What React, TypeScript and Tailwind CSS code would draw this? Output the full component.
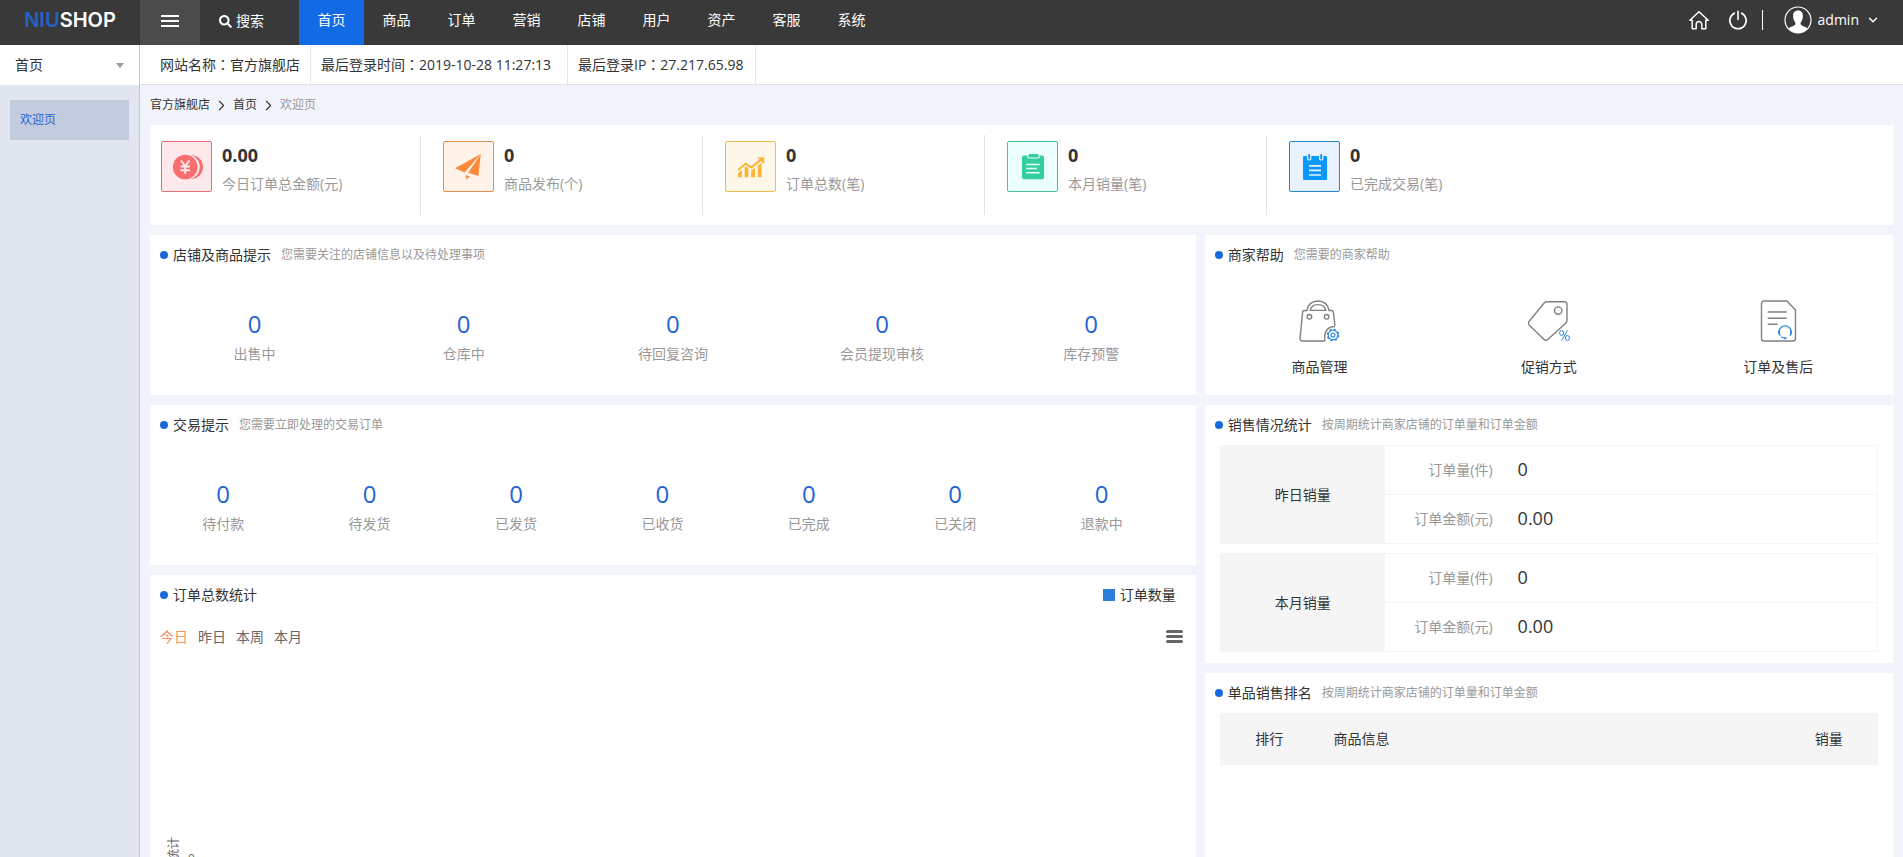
import type { ReactNode } from "react"
import { ChevronDown, ChevronRight } from "lucide-react"
import { FaSearch } from "react-icons/fa"

const menus = ["首页", "商品", "订单", "营销", "店铺", "用户", "资产", "客服", "系统"]

const overview = [
  { value: "0.00", label: "今日订单总金额(元)", box: "border-[#e57079] bg-[#fee9ea]", icon: <YenIcon /> },
  { value: "0", label: "商品发布(个)", box: "border-[#e3914b] bg-[#fff2e8]", icon: <PlaneIcon /> },
  { value: "0", label: "订单总数(笔)", box: "border-[#ecbd4b] bg-[#fdf7ea]", icon: <TrendIcon /> },
  { value: "0", label: "本月销量(笔)", box: "border-[#4abf9f] bg-[#ebfffc]", icon: <ClipboardIcon /> },
  { value: "0", label: "已完成交易(笔)", box: "border-[#2489cc] bg-[#e9f2fc]", icon: <NotepadIcon /> },
]

const shopTips = ["出售中", "仓库中", "待回复咨询", "会员提现审核", "库存预警"]
const tradeTips = ["待付款", "待发货", "已发货", "已收货", "已完成", "已关闭", "退款中"]

const helps = [
  { label: "商品管理", icon: <BagIcon /> },
  { label: "促销方式", icon: <TagIcon /> },
  { label: "订单及售后", icon: <OrderIcon /> },
]

const sales = ["昨日销量", "本月销量"]
const ranges = ["今日", "昨日", "本周", "本月"]

function YenIcon() {
  return (
    <svg viewBox="0 0 49 49" className="size-full">
      <circle cx="29" cy="25" r="12" fill="#f76d70" />
      <circle cx="25.4" cy="25" r="12.4" fill="#fee9ea" />
      <circle cx="23.2" cy="25" r="12.3" fill="#f76d70" />
      <path
        d="M19 18.5l4.2 5.5 4.2-5.5M23.2 24v8M18.4 24.6h9.6M18.4 28.2h9.6"
        fill="none"
        stroke="#fee9ea"
        strokeWidth="2"
      />
    </svg>
  )
}

function PlaneIcon() {
  return (
    <svg viewBox="0 0 49 49" className="size-full" fill="#fb8a3c">
      <path d="M36.8 12L11 26.3l9.6 4.2zM36.8 12l-2.4 22-10.2-3.2zM21.6 33l4.4 1.5-3.6 3z" />
    </svg>
  )
}

function TrendIcon() {
  return (
    <svg viewBox="0 0 49 49" className="size-full" fill="#fbb636">
      <path d="M12 31l3.8-3v7.3H12zM18.6 25.5l1.2-.9 2.6 1.9v8.8h-3.8zM25.2 28.4l3.8-2.6v9.5h-3.8zM31.8 23.8l3.8-3.2v14.7h-3.8z" />
      <path d="M12 28l7.7-6.2 5.7 3.6 10-8" fill="none" stroke="#fbb636" strokeWidth="2" />
      <path d="M31 15.2h7.2v7z" />
    </svg>
  )
}

function ClipboardIcon() {
  return (
    <svg viewBox="0 0 49 49" className="size-full">
      <rect x="14" y="13.5" width="22" height="23.8" rx="2" fill="#35ce9f" />
      <rect x="19.2" y="11" width="12.6" height="5.6" rx="2" fill="#ebfffc" />
      <rect x="20.2" y="12" width="10.6" height="3.4" rx="1.5" fill="#35ce9f" />
      <path d="M18.3 22.4h13.4M18.3 26.6h10.6M18.3 30.8h13.4" stroke="#ebfffc" strokeWidth="1.5" />
    </svg>
  )
}

function NotepadIcon() {
  return (
    <svg viewBox="0 0 49 49" className="size-full">
      <rect x="13" y="14" width="24" height="24" rx="1" fill="#0a98fd" />
      <rect x="17" y="11" width="4.4" height="7.6" rx="2.2" fill="#e9f2fc" />
      <rect x="29" y="11" width="4.4" height="7.6" rx="2.2" fill="#e9f2fc" />
      <rect x="18.2" y="12" width="2" height="5.4" rx="1" fill="#0a98fd" />
      <rect x="30.2" y="12" width="2" height="5.4" rx="1" fill="#0a98fd" />
      <path d="M19 23.8h12M19 28.4h12M19 33h12" stroke="#e9f2fc" strokeWidth="1.7" />
    </svg>
  )
}

function BagIcon() {
  return (
    <svg viewBox="0 0 42 42" className="size-[42px]" fill="none" stroke="#808080" strokeWidth="1.4">
      <path d="M27 41H4.200a2.200 2.200 0 0 1-2.200-2.400L4.600 12.400A2 2 0 0 1 6.600 10.500H9C10 4.800 14 1 20 1s10 3.800 11 9.500h2.400a2 2 0 0 1 2 1.900L37 25.800M37 26.500c-7 0-11.500 4.500-10 14.500" />
      <path d="M12.200 10.400c.7-3.600 3.600-5.800 7.800-5.800s7.100 2.200 7.800 5.800z" />
      <circle cx="11.400" cy="16.800" r="2.300" />
      <circle cx="28.600" cy="16.800" r="2.300" />
      <g stroke="#2b86e6">
        <circle cx="35" cy="35" r="4.800" strokeWidth="1.100" />
        <circle cx="35" cy="35" r="5.700" strokeWidth="1.200" strokeDasharray="2.500 1.970" />
        <circle cx="35" cy="35" r="2" strokeWidth="1.100" />
      </g>
    </svg>
  )
}

function TagIcon() {
  return (
    <svg viewBox="0 0 42 42" className="size-[42px]" fill="none" stroke="#808080" strokeWidth="1.4">
      <path d="M19 1.800h17.500a2.500 2.500 0 0 1 2.500 2.500v15.500a5 5 0 0 1-1.300 3.400L20 39.200a3 3 0 0 1-4.200 0L1.400 25.200a3 3 0 0 1 0-4.200L16.200 3a4 4 0 0 1 2.800-1.200z" />
      <circle cx="30.200" cy="10.600" r="3.700" />
      <g stroke="#2b86e6" strokeWidth="1">
        <ellipse cx="33.600" cy="33" rx="2" ry="2.500" />
        <ellipse cx="39.400" cy="38" rx="2" ry="2.500" />
        <path d="M39.500 30.500l-6 10.200" />
      </g>
    </svg>
  )
}

function OrderIcon() {
  return (
    <svg viewBox="0 0 42 42" className="size-[42px]" fill="none" stroke="#808080" strokeWidth="1.4">
      <path d="M7 1h23l8.500 9v28.500a2.500 2.500 0 0 1-2.500 2.500H7a2.500 2.500 0 0 1-2.500-2.500v-35A2.500 2.500 0 0 1 7 1z" />
      <path d="M10.700 12h19M10.700 18.200h19M10.700 24.200h10" />
      <g stroke="#2b86e6" strokeWidth="1.300">
        <path d="M23.400 35.600a6 6 0 1 1 9.400 0M24.200 36.600c1 1 2.200 1.600 3.800 1.600" />
        <path d="M22 30.600v3.600M34.200 30.600v3.600" strokeWidth="1.700" />
        <path d="M27.200 38.200h2.200" strokeWidth="2" />
      </g>
    </svg>
  )
}

function HomeIcon() {
  return (
    <svg viewBox="0 0 20 20" className="size-5" fill="none" stroke="#fff" strokeWidth="1.500" strokeLinejoin="round">
      <path d="M.8 10.200L10 1.800l9.200 8.400h-2.400v8.600h-4v-4.400a2.800 2.800 0 0 0-5.600 0v4.400h-4v-8.600z" />
    </svg>
  )
}

function PowerIcon() {
  return (
    <svg viewBox="0 0 20 20" className="size-5" fill="none" stroke="#fff" strokeWidth="1.600" strokeLinecap="round">
      <path d="M6.400 3.200a8.200 8.200 0 1 0 7.200 0M10 1.400v8" />
    </svg>
  )
}

function AvatarIcon() {
  return (
    <svg viewBox="0 0 28 28" className="size-7">
      <circle cx="14" cy="14" r="13" fill="none" stroke="#fff" strokeWidth="1.200" />
      <path
        fill="#fff"
        d="M14 4.500c-3.400 0-5 2.300-4.900 5.400 0 1.800.5 3.200.9 4.300.5 1.300 1.500 2 1.500 3.300 0 1.600-1.500 2.100-3.600 3-1.300.5-2.300 1.100-3 2C7 25.300 10.300 27 14 27s7-1.700 9.100-4.500c-.7-.9-1.700-1.500-3-2-2.100-.9-3.600-1.400-3.600-3 0-1.300 1-2 1.500-3.300.4-1.100.9-2.500.9-4.300.1-3.100-1.500-5.400-4.900-5.400z"
      />
    </svg>
  )
}

function Panel({
  title,
  desc,
  extra,
  className = "",
  children,
}: {
  title: string
  desc?: string
  extra?: ReactNode
  className?: string
  children: ReactNode
}) {
  return (
    <section className={`bg-white ${className}`}>
      <div className="flex h-10 items-center pl-[10px] pr-5">
        <span className="mr-[5px] size-2 rounded-full bg-[#1969dc]" />
        <h2 className="text-sm">{title}</h2>
        {desc && <span className="ml-[10px] text-xs text-[#999]">{desc}</span>}
        {extra}
      </div>
      {children}
    </section>
  )
}

function Tips({ items, width }: { items: string[]; width: string }) {
  return (
    <ul className="flex h-[120px] pt-[33px]">
      {items.map((item) => (
        <li key={item} className={`text-center ${width}`}>
          <a href="#" className="block text-2xl leading-8 text-[#2464d2]">
            0
          </a>
          <p className="mt-1 text-sm text-[#999]">{item}</p>
        </li>
      ))}
    </ul>
  )
}

function InfoItem({ label, value, width }: { label: string; value: string; width: string }) {
  return (
    <p className={`border-r border-[#e6e6e6] px-[10px] whitespace-nowrap ${width}`}>
      {label}
      <span className="font-['Noto_Sans_CJK_TC',sans-serif]">：</span>
      {value}
    </p>
  )
}

function Header() {
  return (
    <header className="flex h-[45px] shrink-0 items-stretch bg-[#393939] text-sm text-white">
      <a
        href="#"
        className="flex w-[140px] items-center justify-center pb-[5px] font-['Inter',sans-serif] text-xl font-semibold"
      >
        <span className="text-[#2562c8]">NIU</span>
        <span>SHOP</span>
      </a>
      <button aria-label="菜单" className="flex w-[60px] flex-col items-center justify-center gap-[3px] bg-[#4b4b4b] pb-[3px]">
        <span className="h-[2px] w-[18px] bg-white" />
        <span className="h-[2px] w-[18px] bg-white" />
        <span className="h-[2px] w-[18px] bg-white" />
      </button>
      <button className="flex w-[99px] items-center gap-1 pb-[3px] pl-[19px]">
        <FaSearch className="size-[13px]" />
        搜索
      </button>
      <nav className="flex">
        {menus.map((menu, i) => (
          <a
            key={menu}
            href="#"
            className={`flex w-[65px] items-center justify-center pb-[6px] ${i === 0 ? "bg-[#126ae4]" : ""}`}
          >
            {menu}
          </a>
        ))}
      </nav>
      <div className="ml-auto flex items-center pb-[5px] pr-[23px]">
        <a href="#" aria-label="首页">
          <HomeIcon />
        </a>
        <a href="#" aria-label="退出" className="ml-[19px]">
          <PowerIcon />
        </a>
        <span className="ml-[14px] h-5 w-px bg-white" />
        <button className="ml-[21px] flex items-center">
          <AvatarIcon />
          <span className="ml-[6px]">admin</span>
          <ChevronDown className="ml-[7px] size-[14px]" strokeWidth={2.500} />
        </button>
      </div>
    </header>
  )
}

function Sidebar() {
  return (
    <aside className="w-[140px] shrink-0 border-r border-[#c3c6cf] bg-[#e1e6f1]">
      <button className="flex h-10 w-full items-center justify-between bg-white px-[15px] text-sm">
        首页
        <span className="border-x-4 border-t-[5px] border-x-transparent border-t-[#999]" />
      </button>
      <a href="#" className="mx-[10px] mt-[15px] flex h-10 items-center bg-[#c3cbdf] px-[10px] text-xs text-[#2464d2]">
        欢迎页
      </a>
    </aside>
  )
}

function SalesTable({ name }: { name: string }) {
  return (
    <table className="h-[99px] w-full border border-[#f5f5f5] text-sm">
      <tbody>
        <tr className="border-b border-[#f5f5f5]">
          <th rowSpan={2} scope="rowgroup" className="w-1/4 bg-[#f5f5f5] font-normal">
            {name}
          </th>
          <td className="w-[108px] text-right text-[#999]">订单量(件)</td>
          <td className="pb-[2px] pl-[25px] text-lg leading-5">0</td>
        </tr>
        <tr>
          <td className="text-right text-[#999]">订单金额(元)</td>
          <td className="pb-[2px] pl-[25px] text-lg leading-5">0.00</td>
        </tr>
      </tbody>
    </table>
  )
}

export default function App() {
  return (
    <div className="flex h-screen flex-col overflow-hidden bg-[#f2f4fc] font-['Open_Sans','Noto_Sans_CJK_SC',sans-serif] text-[#333]">
      <Header />
      <div className="flex min-h-0 flex-1">
        <Sidebar />
        <div className="min-w-0 flex-1">
          <div className="flex h-10 border-b border-[#e0e0e0] bg-white pl-[10px] text-sm leading-[39px]">
            <InfoItem label="网站名称" value="官方旗舰店" width="w-[161px]" />
            <InfoItem label="最后登录时间" value="2019-10-28 11:27:13" width="w-[257px]" />
            <InfoItem label="最后登录IP" value="27.217.65.98" width="w-[188px]" />
          </div>

          <main className="px-[10px]">
            <nav className="flex h-10 items-center gap-[3px] text-xs">
              <a href="#">官方旗舰店</a>
              <ChevronRight className="size-[17px]" strokeWidth={1.500} />
              <a href="#">首页</a>
              <ChevronRight className="size-[17px]" strokeWidth={1.500} />
              <span className="text-[#999]">欢迎页</span>
            </nav>

            <ul className="flex h-[100px] bg-white py-[10px]">
              {overview.map((item) => (
                <li
                  key={item.label}
                  className="flex w-[282px] border-r border-[#e3e3e3] pl-[22px] pt-[6px] first:w-[271px] first:pl-[11px] last:border-r-0"
                >
                  <div className={`size-[51px] rounded-xs border ${item.box}`}>{item.icon}</div>
                  <div className="ml-[10px]">
                    <p className="text-lg font-bold">{item.value}</p>
                    <p className="mt-[5px] text-sm text-[#999]">{item.label}</p>
                  </div>
                </li>
              ))}
            </ul>

            <div className="mt-[10px] flex gap-[9px]">
              <div className="flex w-3/5 flex-col gap-[10px]">
                <Panel title="店铺及商品提示" desc="您需要关注的店铺信息以及待处理事项">
                  <Tips items={shopTips} width="w-1/5" />
                </Panel>
                <Panel title="交易提示" desc="您需要立即处理的交易订单">
                  <Tips items={tradeTips} width="w-[14%]" />
                </Panel>
                <Panel
                  title="订单总数统计"
                  extra={
                    <span className="ml-auto flex items-center gap-[5px] text-sm">
                      <span className="size-3 bg-[#2f7ed8]" />
                      订单数量
                    </span>
                  }
                >
                  <div className="flex h-[43px] items-center justify-between pl-[10px] pr-[13px]">
                    <div className="flex gap-[10px] text-sm text-[#666]">
                      {ranges.map((range, i) => (
                        <button key={range} className={i === 0 ? "text-[#f98f5e]" : ""}>
                          {range}
                        </button>
                      ))}
                    </div>
                    <button aria-label="图表菜单" className="flex flex-col gap-[2px]">
                      <span className="h-[3px] w-[17px] rounded-full bg-[#666]" />
                      <span className="h-[3px] w-[17px] rounded-full bg-[#666]" />
                      <span className="h-[3px] w-[17px] rounded-full bg-[#666]" />
                    </button>
                  </div>
                  <div className="flex h-[400px] gap-[6px] pl-4 pt-[179px] text-xs text-[#666]">
                    <span className="h-[72px] rotate-180 leading-4 [text-orientation:sideways] [writing-mode:vertical-rl]">
                      订单总数统计
                    </span>
                    <span className="mt-[14px]">0</span>
                  </div>
                </Panel>
              </div>

              <div className="flex flex-1 flex-col gap-[10px]">
                <Panel title="商家帮助" desc="您需要的商家帮助">
                  <ul className="flex h-[120px] pt-[25px]">
                    {helps.map((help) => (
                      <li key={help.label} className="w-1/3">
                        <a href="#" className="flex flex-col items-center gap-[15px] text-sm">
                          {help.icon}
                          {help.label}
                        </a>
                      </li>
                    ))}
                  </ul>
                </Panel>
                <Panel title="销售情况统计" desc="按周期统计商家店铺的订单量和订单金额">
                  <div className="flex flex-col gap-[9px] px-[15px] pb-[11px]">
                    {sales.map((name) => (
                      <SalesTable key={name} name={name} />
                    ))}
                  </div>
                </Panel>
                <Panel title="单品销售排名" desc="按周期统计商家店铺的订单量和订单金额" className="flex-1">
                  <div className="px-[15px]">
                    <table className="w-full text-sm">
                      <thead>
                        <tr className="h-[52px] bg-[#f5f5f5]">
                          <th className="w-[15%] font-normal">排行</th>
                          <th className="pl-[15px] text-left font-normal">商品信息</th>
                          <th className="w-[15%] font-normal">销量</th>
                        </tr>
                      </thead>
                    </table>
                  </div>
                </Panel>
              </div>
            </div>
          </main>
        </div>
      </div>
    </div>
  )
}
